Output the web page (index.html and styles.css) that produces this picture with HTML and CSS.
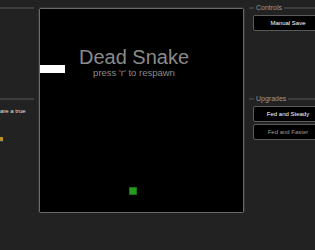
FILE: index.html
```html
<!DOCTYPE html>
<html lang="en">
<head>
    <meta charset="UTF-8">
    <meta name="viewport" content="width=device-width, initial-scale=1.0">
    <title>Snake</title>
    <link rel="stylesheet" href="styles.css">
</head>
<body>
    <div class="layout">
        <div class="side-left">
            <div class="group">
                <div class="group-head"><span class="rule"></span></div>
            </div>
            <div class="group">
                <div class="group-head"><span class="rule"></span></div>
                <p class="note">are a true</p>
                <div class="trophy-row"><span class="trophy"></span></div>
            </div>
        </div>

        <div class="board">
            <svg width="203" height="203" viewBox="0 0 203 203">
                <rect x="0" y="0" width="203" height="203" fill="#000"></rect>
                <text class="dead" x="94" y="55" text-anchor="middle">Dead Snake</text>
                <text class="respawn" x="94" y="67" text-anchor="middle">press 'r' to respawn</text>
                <rect x="0" y="56" width="25" height="8" fill="#fff"></rect>
                <rect x="89.5" y="178.5" width="7" height="7" fill="#249c1c" stroke="#1a6c14" stroke-width="1"></rect>
            </svg>
        </div>

        <div class="side-right">
            <div class="group">
                <div class="group-head"><span class="dash"></span><span class="legend">Controls</span><span class="rule"></span></div>
                <button class="btn">Manual Save</button>
            </div>
            <div class="group">
                <div class="group-head"><span class="dash"></span><span class="legend">Upgrades</span><span class="rule"></span></div>
                <button class="btn">Fed and Steady</button>
                <button class="btn locked">Fed and Faster</button>
            </div>
        </div>
    </div>
</body>
</html>
```

FILE: styles.css
```css
body {
    margin: 0;
    background-color: #222222;
    font-family: 'Liberation Sans', Arial, sans-serif;
    color: #dddddd;
    overflow: hidden;
}
.layout {
    display: flex;
    align-items: flex-start;
    padding-top: 3px;
    width: 340px;
}
.side-left {
    width: 34px;
    flex-shrink: 0;
}
.group {
    min-height: 91px;
}
.group-head {
    display: flex;
    align-items: center;
    height: 10px;
}
.rule {
    flex: 1;
    height: 2px;
    background-color: #3d3d3d;
}
.dash {
    width: 5px;
    height: 2px;
    margin-left: 1px;
    background-color: #3d3d3d;
}
.legend {
    font-size: 7px;
    color: #9a9a9a;
    padding: 0 2px;
    line-height: 10px;
}
.note {
    margin: 3px 0 0;
    font-size: 6px;
    line-height: 8px;
    white-space: nowrap;
    color: #e0e0e0;
}
.trophy-row {
    display: flex;
    margin-top: 22px;
}
.trophy {
    width: 3px;
    height: 4px;
    background-color: #b8932a;
    border-bottom: 1px solid #2c3a55;
}
.board {
    flex-shrink: 0;
    margin: 5px 0 0 5px;
    border: 1px solid #6a6a6a;
    border-radius: 2px;
    box-shadow: 0 0 0 1px #333333;
    line-height: 0;
}
.board svg {
    display: block;
}
.dead {
    font-family: 'Liberation Sans', Arial, sans-serif;
    font-size: 20px;
    fill: #8a8a8a;
}
.respawn {
    font-family: 'Liberation Sans', Arial, sans-serif;
    font-size: 9.5px;
    fill: #8a8a8a;
}
.side-right {
    flex-shrink: 0;
    width: 78px;
    margin-left: 4px;
    display: flex;
    flex-direction: column;
}
.side-right .group {
    display: flex;
    flex-direction: column;
    gap: 2px;
}
.btn {
    margin-left: 5px;
    width: 70px;
    height: 16px;
    padding: 0;
    background-color: #000000;
    border: 1px solid #5a5a5a;
    border-radius: 2px;
    color: #ffffff;
    font-family: 'Liberation Sans', Arial, sans-serif;
    font-size: 6px;
    cursor: pointer;
}
.btn.locked {
    color: #9a9a9a;
}
```
